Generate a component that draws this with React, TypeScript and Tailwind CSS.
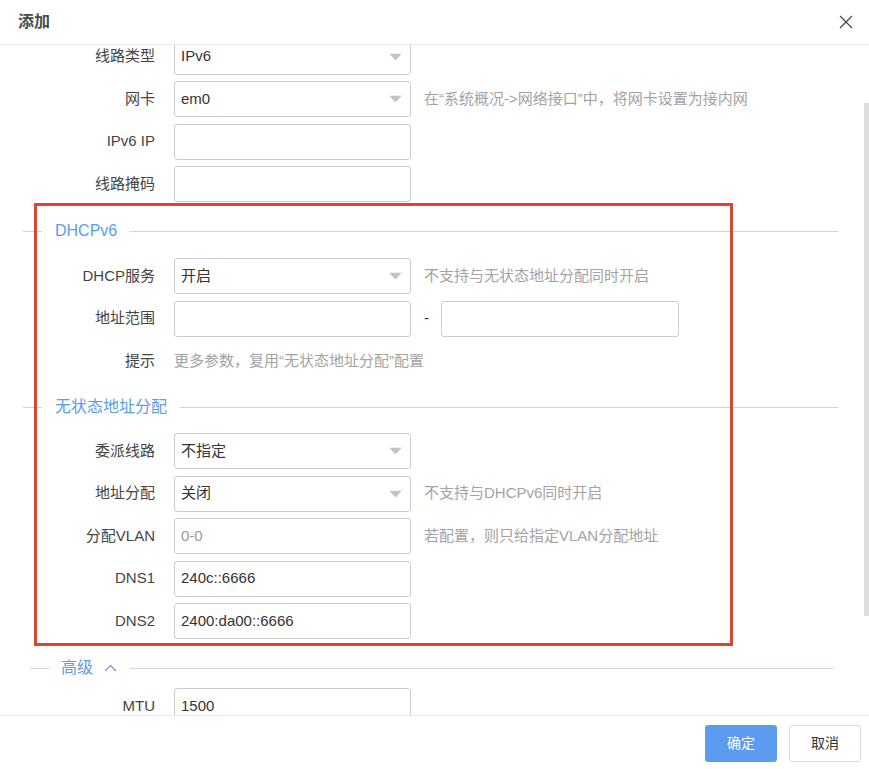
import React from 'react';

const font = { fontFamily: '"Liberation Sans", "Noto Sans CJK SC", sans-serif' };

function Arrow() {
  return (
    <svg className="absolute right-[8px] top-1/2 -translate-y-1/2" width="13" height="7" viewBox="0 0 13 7">
      <path d="M0 0 L13 0 L6.5 7 Z" fill="#c4c4c4" />
    </svg>
  );
}

interface FieldProps {
  label: string;
  value?: string;
  placeholder?: string;
  select?: boolean;
  hint?: string;
}

function Field({ label, value, placeholder, select, hint }: FieldProps) {
  return (
    <div className="flex items-center h-[36px]">
      <div className="w-[155px] shrink-0 text-right text-[15px] text-[#444]">{label}</div>
      <div className="relative ml-[19px] w-[237px] h-[36px] shrink-0 rounded-[3px] border border-[#cccccc] bg-white flex items-center px-[6px] text-[15px]">
        {value ? (
          <span className="text-[#333]">{value}</span>
        ) : placeholder ? (
          <span className="text-[#999]">{placeholder}</span>
        ) : null}
        {select && <Arrow />}
      </div>
      {hint && <div className="ml-[13px] text-[15px] text-[#a3a3a3] whitespace-nowrap">{hint}</div>}
    </div>
  );
}

function Divider({ title, chevron, wide }: { title: string; chevron?: boolean; wide?: boolean }) {
  return (
    <div className={`flex items-center h-[24px] ${wide ? 'ml-[23px] mr-[31px]' : 'ml-[30px] mr-[36px]'}`}>
      <div className="w-[19px] h-px bg-[#c6d5ea]" />
      <div className={`flex items-center text-[16px] text-[#5b9cf0] ${wide ? 'ml-[13px] mr-[12px]' : 'ml-[12px] mr-[13px]'}`}>
        <span>{title}</span>
        {chevron && (
          <svg className="ml-[11px]" width="13" height="8" viewBox="0 0 13 8">
            <path d="M1 7 L6.5 1.5 L12 7" fill="none" stroke="#5b9cf0" strokeWidth="1.2" />
          </svg>
        )}
      </div>
      <div className="flex-1 h-px bg-[#c6d5ea]" />
    </div>
  );
}

export default function App() {
  return (
    <div className="w-[869px] h-[769px] bg-white rounded-[8px] overflow-hidden flex flex-col" style={font}>
      {/* Header */}
      <div className="h-[45px] shrink-0 border-b border-[#e8e8e8] flex items-center justify-between pl-[18px] pr-[16px]">
        <span className="text-[16px] font-bold text-[#4a4a4a]">添加</span>
        <svg width="14" height="14" viewBox="0 0 14 14">
          <path d="M1 1 L13 13 M13 1 L1 13" stroke="#444" strokeWidth="1.2" />
        </svg>
      </div>

      {/* Body */}
      <div className="relative h-[670px] shrink-0 overflow-hidden">
        <div className="-mt-[6.5px] flex flex-col">
          <div className="flex flex-col gap-[6.5px]">
            <Field label="线路类型" value="IPv6" select />
            <Field label="网卡" value="em0" select hint="在“系统概况->网络接口”中，将网卡设置为接内网" />
            <Field label="IPv6 IP" />
            <Field label="线路掩码" />
          </div>

          <div className="mt-[17px]">
            <Divider title="DHCPv6" wide />
          </div>

          <div className="mt-[15px] flex flex-col gap-[6.5px]">
            <Field label="DHCP服务" value="开启" select hint="不支持与无状态地址分配同时开启" />
            <div className="flex items-center h-[36px]">
              <div className="w-[155px] shrink-0 text-right text-[15px] text-[#444]">地址范围</div>
              <div className="ml-[19px] w-[237px] h-[36px] shrink-0 rounded-[3px] border border-[#cccccc]" />
              <div className="ml-[13px] w-[17px] text-[15px] text-[#333]">-</div>
              <div className="w-[238px] h-[36px] shrink-0 rounded-[3px] border border-[#cccccc]" />
            </div>
            <div className="flex items-center h-[36px]">
              <div className="w-[155px] shrink-0 text-right text-[15px] text-[#444]">提示</div>
              <div className="ml-[19px] text-[15px] text-[#a3a3a3]">更多参数，复用“无状态地址分配”配置</div>
            </div>
          </div>

          <div className="mt-[16px]">
            <Divider title="无状态地址分配" wide />
          </div>

          <div className="mt-[14px] flex flex-col gap-[6.5px]">
            <Field label="委派线路" value="不指定" select />
            <Field label="地址分配" value="关闭" select hint="不支持与DHCPv6同时开启" />
            <Field label="分配VLAN" placeholder="0-0" hint="若配置，则只给指定VLAN分配地址" />
            <Field label="DNS1" value="240c::6666" />
            <Field label="DNS2" value="2400:da00::6666" />
          </div>

          <div className="mt-[17px]">
            <Divider title="高级" chevron />
          </div>

          <div className="mt-[8px]">
            <Field label="MTU" value="1500" />
          </div>
        </div>

        {/* red highlight annotation */}
        <div className="absolute left-[34px] top-[158px] w-[699px] h-[443px] border-[3px] border-[#d9472e] pointer-events-none" />

        {/* scrollbar */}
        <div className="absolute right-0 top-[58px] w-[5px] h-[513px] bg-[#dddddd]" />
      </div>

      {/* Footer */}
      <div className="flex-1 border-t border-[#e8e8e8] flex items-center justify-end gap-[12px] pr-[8px] pt-[1px]">
        <button className="w-[72px] h-[37px] rounded-[3px] bg-[#5c9cf0] text-white text-[14px]">确定</button>
        <button className="w-[72px] h-[37px] rounded-[3px] border border-[#dcdcdc] bg-white text-[#333] text-[14px]">取消</button>
      </div>
    </div>
  );
}
